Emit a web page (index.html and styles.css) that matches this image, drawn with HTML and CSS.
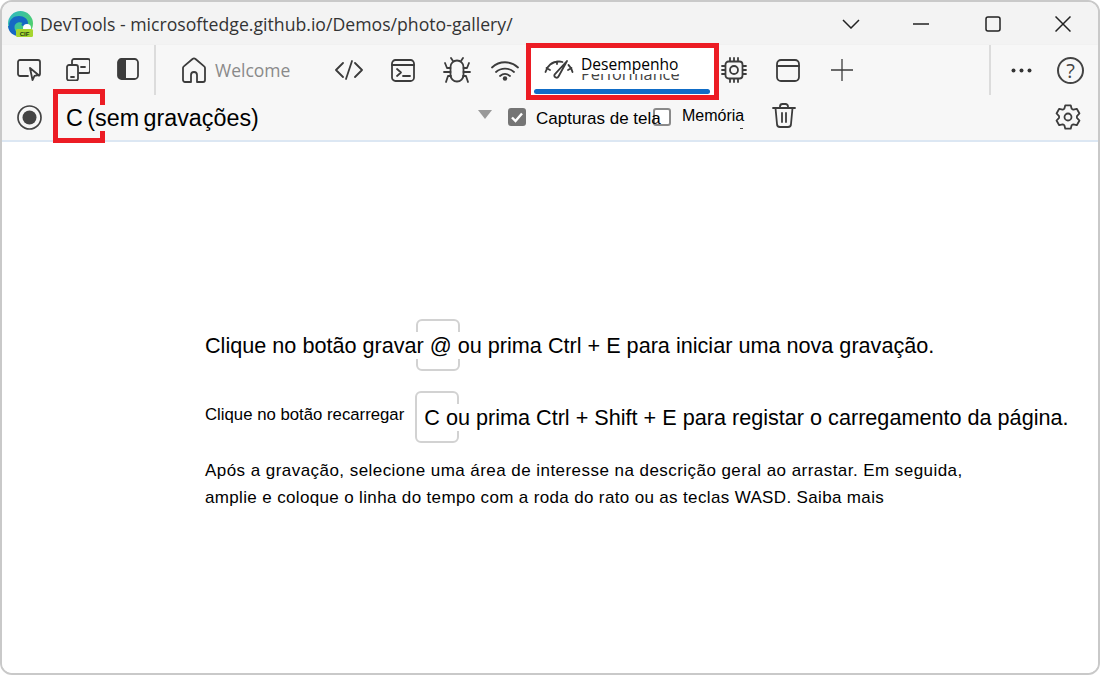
FILE: index.html
```html
<!DOCTYPE html>
<html lang="pt">
<head>
<meta charset="utf-8">
<title>DevTools</title>
<link rel="stylesheet" href="styles.css">
</head>
<body>
<div class="window">
  <header class="titlebar">
    <svg class="logo" viewBox="0 0 26 26">
      <defs>
        <linearGradient id="edgeA" x1="0" y1="0" x2="1" y2="0.6"><stop offset="0" stop-color="#2bb6c9"/><stop offset="1" stop-color="#4fd06b"/></linearGradient>
      </defs>
      <circle cx="12.500" cy="12.500" r="12.500" fill="url(#edgeA)"/>
      <path d="M1 15C1 8 6 5 11 5c5 0 9 3 9 7 0 2-2 3-4 3-3 0-3-2-1.500-3-3-2-8 0-8 4 0 4 3 7 7 9-7 1-13-3-13.500-10z" fill="#1668c4"/>
      <circle cx="19" cy="17" r="4" fill="#fff"/>
      <rect x="8" y="18" width="17" height="8" rx="1.500" fill="#a6d52f"/>
      <text class="logo-text" x="16.500" y="24.500">CIF</text>
    </svg>
    <span class="title">DevTools - microsoftedge.github.io/Demos/photo-gallery/</span>
    <svg class="ctl chevron" viewBox="0 0 18 10"><path d="M1 1l8 8 8-8"/></svg>
    <svg class="ctl minimize" viewBox="0 0 16 2"><path d="M0 1h16"/></svg>
    <svg class="ctl maximize" viewBox="0 0 16 16"><rect x="1" y="1" width="14" height="14" rx="2"/></svg>
    <svg class="ctl close" viewBox="0 0 16 16"><path d="M.5.5l15 15M15.500.5l-15 15"/></svg>
  </header>

  <nav class="toolbar">
    <svg class="ic i-inspect" viewBox="0 0 24 22"><path d="M11 17H3a2 2 0 0 1-2-2V3a2 2 0 0 1 2-2h18a2 2 0 0 1 2 2v12a2 2 0 0 1-1 1.700"/><path d="M13 9l8.500 7-4 .8-2 4.200z"/></svg>
    <svg class="ic i-device" viewBox="0 0 24 23"><path d="M6 6V3a2 2 0 0 1 2-2h14a2 2 0 0 1 2 2v10a2 2 0 0 1-2 2h-9"/><rect x="1" y="7" width="11" height="15.500" rx="2"/><path d="M5 19h3M15 9h4"/></svg>
    <svg class="ic i-side" viewBox="0 0 22 22"><rect x="1" y="1" width="20" height="20" rx="3.500"/><path class="fill" d="M4.500 1H9v20H4.500A3.500 3.500 0 0 1 1 17.500v-13A3.500 3.500 0 0 1 4.500 1z"/></svg>
    <span class="sep sep-a"></span>
    <svg class="ic i-home" viewBox="0 0 24 26"><path d="M9 25H3a2 2 0 0 1-2-2V11a2 2 0 0 1 .8-1.600L10.500 2a2.500 2.500 0 0 1 3 0l8.700 7.400A2 2 0 0 1 23 11v12a2 2 0 0 1-2 2h-6v-7a3 3 0 0 0-6 0z"/></svg>
    <span class="welcome">Welcome</span>
    <svg class="ic i-code" viewBox="0 0 28 20"><path d="M8 3L1 10l7 7M20 3l7 7-7 7M17 1l-6 18"/></svg>
    <svg class="ic i-console" viewBox="0 0 24 23"><rect x="1" y="1" width="22" height="21" rx="3.500"/><path d="M1 6h22M6 10l4 3.500L6 17M12 17h7"/></svg>
    <svg class="ic i-bug" viewBox="0 0 28 26"><path d="M7.500 10a6.500 6.500 0 0 1 13 0v8a6.500 6.500 0 0 1-13 0z"/><path d="M10 4L8 1M18 4l2-3M7.500 11H4L2 6M20.500 11H24l2-5M7.500 15H1M20.500 15H27M8 19H5l-2 6M20 19h3l2 6"/></svg>
    <svg class="ic i-wifi" viewBox="0 0 28 21"><path d="M1 7.500c7.500-7 18.500-7 26 0M5 12c5-4.500 13-4.500 18 0M9 16c3-2.500 7-2.500 10 0"/><circle class="fill" cx="14" cy="18.500" r="2.200"/></svg>
    <div class="tab">
      <svg class="ic i-gauge" viewBox="0 0 30 21"><path d="M1.500 14C3 8 8 3.500 15 3.500c1.500 0 2.500.2 3.500.5M24.500 7c2 2 3.500 4.500 4 7M2.500 10l3.500 2M13 3.500v2.500M27.500 10l-3.500 2"/><path d="M23 3L14.500 18.500a2.200 2.200 0 0 1-4-1.800z"/></svg>
      <div class="tab-labels">
        <span class="ghost">Performance</span>
        <span class="tab-label">Desempenho</span>
      </div>
      <span class="tab-line"></span>
      <span class="mark mark-tab"></span>
    </div>
    <svg class="ic i-chip" viewBox="0 0 26 26"><rect x="4.500" y="4.500" width="17" height="17" rx="3"/><circle cx="13" cy="13" r="4"/><path d="M9 1v3M13 1v3M17 1v3M9 22v3M13 22v3M17 22v3M1 9h3M1 13h3M1 17h3M22 9h3M22 13h3M22 17h3"/></svg>
    <svg class="ic i-win" viewBox="0 0 24 23"><rect x="1" y="1" width="22" height="21" rx="4"/><path d="M1 7h22"/></svg>
    <svg class="ic i-plus" viewBox="0 0 22 22"><path d="M11 0v22M0 11h22"/></svg>
    <span class="sep sep-b"></span>
    <svg class="i-dots" viewBox="0 0 21 5"><circle cx="2.500" cy="2.500" r="2"/><circle cx="10.500" cy="2.500" r="2"/><circle cx="18.500" cy="2.500" r="2"/></svg>
    <div class="help">?</div>
  </nav>

  <div class="recbar">
    <span class="mark mark-rec"></span>
    <svg class="i-record" viewBox="0 0 25 25"><circle class="ring" cx="12.500" cy="12.500" r="11.500"/><circle class="dot" cx="12.500" cy="12.500" r="7"/></svg>
    <span class="rec-label">C (sem gravações)</span>
    <span class="triangle"></span>
    <span class="check checked"><svg viewBox="0 0 18 18"><path d="M4 9.500l3.500 3.500L14 5.500"/></svg></span>
    <span class="opt opt-shots">Capturas de tela</span>
    <span class="check unchecked"></span>
    <span class="opt opt-mem">Memória</span>
    <svg class="ic i-trash" viewBox="0 0 24 25"><path d="M1 5h22M8 5V3.500A2.500 2.500 0 0 1 10.500 1h3A2.500 2.500 0 0 1 16 3.500V5M3.500 5l1.500 16a3 3 0 0 0 3 3h8a3 3 0 0 0 3-3l1.500-16M10 10v9M14 10v9"/></svg>
    <svg class="ic i-gear" viewBox="0 0 26 26"><path d="M9.340 4.780L10.300 1.310H15.700L16.660 4.780L18.290 5.720L21.780 4.820L24.480 9.490L21.950 12.060V13.940L24.480 16.510L21.780 21.180L18.290 20.280L16.660 21.220L15.700 24.690H10.300L9.340 21.220L7.710 20.280L4.220 21.180L1.520 16.510L4.050 13.940V12.060L1.520 9.490L4.220 4.820L7.710 5.720z"/><circle cx="13" cy="13" r="3.500"/></svg>
  </div>

  <main class="landing">
    <p class="line line-one">
      <span class="key key-one"></span>
      <span class="big">Clique no botão gravar @ ou prima Ctrl + E para iniciar uma nova gravação.</span>
    </p>
    <p class="line line-two">
      <span class="key key-two"></span>
      <span class="small">Clique no botão recarregar</span>
      <span class="big big-two">C ou prima Ctrl + Shift + E para registar o carregamento da página.</span>
    </p>
    <p class="para">Após a gravação, selecione uma área de interesse na descrição geral ao arrastar. Em seguida,</p>
    <p class="para para-last">amplie e coloque o linha do tempo com a roda do rato ou as teclas WASD. Saiba mais</p>
  </main>
</div>
</body>
</html>
```

FILE: styles.css
```css
* { box-sizing: border-box; }
html, body { margin: 0; padding: 0; background: #fff; }
body { width: 1100px; height: 675px; overflow: hidden; font-family: "Liberation Sans", Arial, sans-serif; color: #000; }
p { margin: 0; }

.window { width: 1100px; height: 675px; border: 2px solid #c9c9c9; border-radius: 12px; display: flex; flex-direction: column; overflow: hidden; background: #fff; }

.titlebar { flex: 0 0 43px; display: flex; align-items: center; background: #f3f3f3; padding-left: 6px; }
.logo { width: 26px; height: 26px; flex: none; }
.logo-text { font: bold 6px "Liberation Sans", sans-serif; fill: #1d3a12; text-anchor: middle; }
.title { margin-left: 6px; font: 17.670px "Open Sans", sans-serif; color: #333; white-space: nowrap; width: 802px; }
.ctl { flex: none; fill: none; stroke: #222; stroke-width: 1.500; }
.chevron { width: 18px; height: 10px; margin-top: 1px; }
.minimize { width: 16px; height: 2px; margin-left: 53px; }
.maximize { width: 16px; height: 16px; margin-left: 56px; }
.close { width: 16px; height: 16px; margin-left: 54px; }

.toolbar { flex: 0 0 50px; display: flex; align-items: center; background: #f7f7f7; box-shadow: 0 1px 2px #e2e2e2; padding-left: 15px; position: relative; }
.ic { flex: none; fill: none; stroke: #3c3c3c; stroke-width: 1.800; stroke-linecap: round; stroke-linejoin: round; }
.ic .fill, .fill { fill: #3c3c3c; stroke: none; }
.i-inspect { width: 24px; height: 22px; }
.i-device { width: 24px; height: 23px; margin-left: 25px; margin-bottom: 2px; }
.i-side { width: 22px; height: 22px; margin-left: 27px; margin-bottom: 3px; }
.sep { flex: none; width: 2px; align-self: stretch; background: #dcdcdc; }
.sep-a { margin-left: 15px; }
.i-home { width: 24px; height: 26px; margin-left: 26px; margin-bottom: 1px; }
.welcome { margin-left: 9px; width: 75px; font: 17.500px "Open Sans", sans-serif; color: #8a8a8a; white-space: nowrap; }
.i-code { width: 28px; height: 20px; margin-left: 45px; }
.i-console { width: 24px; height: 23px; margin-left: 28px; }
.i-bug { width: 28px; height: 26px; margin-left: 28px; }
.i-wifi { width: 28px; height: 21px; margin-left: 20px; }
.tab { flex: none; position: relative; align-self: stretch; width: 183px; margin-left: 12px; margin-top: 3px; background: #fff; display: flex; align-items: flex-start; }
.i-gauge { width: 30px; height: 21px; margin-left: 13px; margin-top: 10px; }
.tab-labels { position: relative; margin-left: 7px; margin-top: 7px; }
.tab-label { display: block; position: relative; background: #fff; font: 15.600px/19px "Open Sans", "Liberation Sans", sans-serif; }
.ghost { position: absolute; left: 0; top: 10px; font: 16.300px/19px "Open Sans", sans-serif; color: #444; white-space: nowrap; }
.tab-line { position: absolute; left: 3px; right: 4px; bottom: 1px; height: 5px; border-radius: 3px; background: #0f6cc7; }
.mark { position: absolute; border: 5px solid #ec1c24; z-index: 5; pointer-events: none; }
.mark-tab { left: -5px; right: -5px; top: -5px; bottom: -5px; }
.i-chip { width: 26px; height: 26px; margin-left: 7px; }
.i-win { width: 24px; height: 23px; margin-left: 29px; }
.i-plus { width: 22px; height: 22px; margin-left: 31px; stroke-width: 1.300; }
.sep-b { margin-left: 136px; }
.i-dots { flex: none; width: 21px; height: 5px; margin-left: 20px; fill: #333; }
.help { flex: none; width: 27px; height: 27px; margin-left: 25px; border: 2px solid #444; border-radius: 50%; font: 20px/23px "Open Sans", sans-serif; text-align: center; color: #444; }

.recbar { flex: 0 0 47px; display: flex; align-items: center; position: relative; background: #f7f7f7; border-bottom: 2px solid #dce7f3; padding-left: 15px; }
.mark-rec { left: 51px; top: -6px; width: 52px; height: 54px; }
.i-record { flex: none; width: 25px; height: 25px; }
.ring { fill: none; stroke: #444; stroke-width: 1.700; }
.dot { fill: #444; }
.rec-label { position: relative; z-index: 6; margin-left: 24px; width: 192px; font-size: 23.300px; line-height: 26px; background: #f7f7f7; white-space: nowrap; word-spacing: -2px; }
.triangle { flex: none; margin-left: 220px; margin-bottom: 6px; width: 0; height: 0; border-left: 7px solid transparent; border-right: 7px solid transparent; border-top: 9px solid #999; }
.check { flex: none; width: 18px; height: 18px; border-radius: 3px; margin-bottom: 2px; }
.check svg { display: block; width: 18px; height: 18px; fill: none; stroke: #fff; stroke-width: 2.400; }
.checked { margin-left: 16px; background: #757575; }
.opt { font-size: 16px; white-space: nowrap; position: relative; z-index: 1; }
.opt-shots { margin-left: 10px; width: 117px; font-size: 17px; margin-top: 3px; }
.unchecked { border: 2px solid #8a8a8a; margin-left: 0; background: #fff; }
.opt-mem { margin-left: 11px; width: 62px; margin-bottom: 3px; }
.opt-mem::after { content: ""; position: absolute; right: 1px; bottom: -4px; width: 3px; height: 1px; background: #444; }
.i-trash { width: 24px; height: 25px; margin-left: 28px; margin-bottom: 4px; }
.i-gear { width: 26px; height: 26px; margin-left: 259px; margin-bottom: 2px; }

.landing { flex: 1; padding: 190px 0 0 203px; background: #fff; }
.line { position: relative; display: flex; align-items: center; height: 27px; white-space: nowrap; }
.line-two { margin-top: 45px; }
.key { position: absolute; top: -13px; width: 44px; height: 52px; border: 2px solid #d2d2d2; border-radius: 6px; background: #fff; }
.key-one { left: 211px; }
.key-two { left: 210px; }
.big { position: relative; font-size: 21.630px; line-height: 27px; background: #fff; }
.small { position: relative; font-size: 16.760px; margin-bottom: 5px; }
.big-two { margin-left: 20px; }
.para { font-size: 17px; line-height: 27px; letter-spacing: .45px; white-space: nowrap; margin-top: 26px; }
.para-last { margin-top: 0; letter-spacing: .35px; }
```
